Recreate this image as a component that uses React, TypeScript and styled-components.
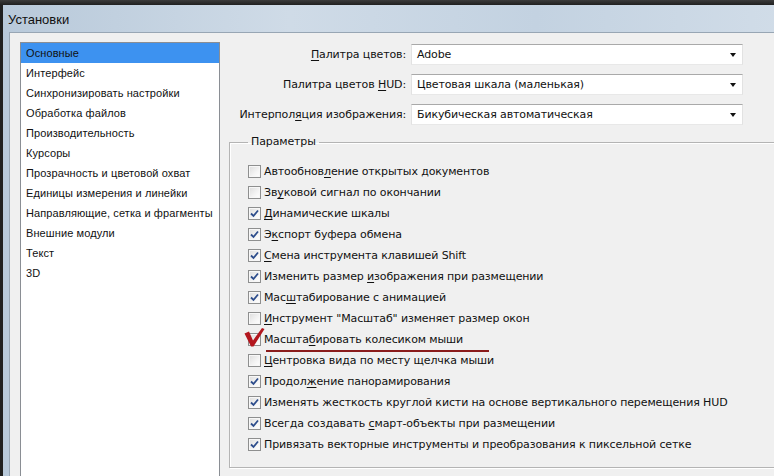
import styled, { createGlobalStyle } from 'styled-components';

const Global = createGlobalStyle`
  html, body {
    margin: 0;
    padding: 0;
    background: #262626;
  }
`;

const Screen = styled.div`
  width: 774px;
  height: 476px;
  overflow: hidden;
  padding: 5px 0 0 3px;
  box-sizing: border-box;
  background: linear-gradient(180deg, #3b3b3b 0px, #202020 5px);
`;

const Window = styled.div`
  width: 820px;
  height: 520px;
  display: flex;
  flex-direction: column;
  background: linear-gradient(90deg, #b8c9da 0%, #cfdbe7 35%, #c3d2e1 65%, #d3dee9 100%);
`;

const TitleBar = styled.div`
  height: 27px;
  display: flex;
  align-items: center;
  padding: 1px 0 0 5px;
  box-sizing: border-box;
  font-family: "Liberation Sans", Arial, sans-serif;
  font-size: 13px;
  color: #111;
`;

const Client = styled.div`
  flex: 1;
  margin-left: 6px;
  display: flex;
  align-items: flex-start;
  padding: 9px 0 0 10px;
  background: #f0f0f0;
  border-top: 1px solid #98a6b4;
  border-left: 1px solid #98a6b4;
`;

const CategoryList = styled.ul`
  list-style: none;
  margin: 0;
  padding: 0;
  width: 198px;
  height: 480px;
  background: #fff;
  border: 1px solid #8a8e94;
  font-family: "Liberation Sans", Arial, sans-serif;
  font-size: 11px;
  letter-spacing: 0.1px;
  color: #111;
`;

const Category = styled.li<{ $active?: boolean }>`
  height: 20px;
  line-height: 21px;
  padding-left: 5px;
  background: ${(p) => (p.$active ? '#3d92f0' : 'transparent')};
  white-space: nowrap;
`;

const Settings = styled.div`
  margin-left: 9px;
  flex: 1;
  font-family: "DejaVu Sans", Verdana, sans-serif;
  font-size: 11px;
  letter-spacing: -0.12px;
  color: #111;
`;

const FormGrid = styled.div`
  display: grid;
  grid-template-columns: 177px 332px;
  column-gap: 5px;
  row-gap: 9px;
  padding-top: 2px;
`;

const Label = styled.label`
  height: 21px;
  display: flex;
  align-items: center;
  justify-content: flex-end;
  white-space: nowrap;
`;

const Combo = styled.div`
  height: 21px;
  box-sizing: border-box;
  display: flex;
  align-items: center;
  justify-content: space-between;
  padding: 0 6px 0 5px;
  background: #fff;
  border-top: 1px solid #a9a9a9;
  border-left: 1px solid #e2e2e2;
  border-right: 1px solid #e2e2e2;
  border-bottom: 1px solid #e8e8e8;
`;

const Arrow = styled.span`
  width: 0;
  height: 0;
  border-left: 3.5px solid transparent;
  border-right: 3.5px solid transparent;
  border-top: 4px solid #111;
`;

const Key = styled.span`
  text-decoration: underline;
  text-underline-offset: 2px;
`;

const Group = styled.fieldset`
  margin: 10px 0 0 0;
  padding: 12px 0 12px 18px;
  border: 1px solid #b4b4b4;
  box-shadow: inset 1px 1px 0 #fff, 1px 1px 0 #fff;
  min-width: 0;
`;

const Legend = styled.legend`
  padding: 0 3px;
  line-height: 14px;
  color: #111;
`;

const OptionRow = styled.div`
  position: relative;
  height: 21px;
  display: flex;
  align-items: center;
  gap: 3px;
  white-space: nowrap;
`;

const Box = styled.span`
  width: 13px;
  height: 13px;
  box-sizing: border-box;
  border: 1px solid #8e8f8f;
  background: linear-gradient(135deg, #dcdcdc 0%, #f4f4f4 60%, #ffffff 100%);
  box-shadow: inset 0 0 0 1px #f7f7f7;
  display: flex;
  align-items: center;
  justify-content: center;
  flex-shrink: 0;
`;

const RedCheck = styled.svg`
  position: absolute;
  left: -4px;
  top: -2px;
`;

const RedLine = styled.span`
  position: absolute;
  left: 18px;
  top: 21px;
  width: 223px;
  height: 2px;
  background: #8a1c1c;
`;

type Part = string | { k: string };

const options: { parts: Part[]; checked: boolean; marked?: boolean }[] = [
  { parts: ['Автообнов', { k: 'л' }, 'ение открытых документов'], checked: false },
  { parts: ['Зв', { k: 'у' }, 'ковой сигнал по окончании'], checked: false },
  { parts: [{ k: 'Д' }, 'инамические шкалы'], checked: true },
  { parts: ['Э', { k: 'к' }, 'спорт буфера обмена'], checked: true },
  { parts: [{ k: 'С' }, 'мена инструмента клавишей Shift'], checked: true },
  { parts: ['Изменить размер ', { k: 'и' }, 'зображения при размещении'], checked: true },
  { parts: ['Мас', { k: 'ш' }, 'табирование с анимацией'], checked: true },
  { parts: [{ k: 'И' }, 'нструмент "Масштаб" изменяет размер окон'], checked: false },
  { parts: ['Масшта', { k: 'б' }, 'ировать колесиком мыши'], checked: false, marked: true },
  { parts: [{ k: 'Ц' }, 'ентровка вида по месту щелчка мыши'], checked: false },
  { parts: ['Продол', { k: 'ж' }, 'ение панорамирования'], checked: true },
  { parts: ['Изменять жесткость круглой кисти на основе вертикального перемещения HUD'], checked: true },
  { parts: ['Всегда создавать ', { k: 'с' }, 'март-объекты при размещении'], checked: true },
  { parts: ['Привязать векторные инструменты и преобразования к пиксельной сетке'], checked: true },
];

const categories = [
  'Основные',
  'Интерфейс',
  'Синхронизировать настройки',
  'Обработка файлов',
  'Производительность',
  'Курсоры',
  'Прозрачность и цветовой охват',
  'Единицы измерения и линейки',
  'Направляющие, сетка и фрагменты',
  'Внешние модули',
  'Текст',
  '3D',
];

const renderParts = (parts: Part[]) =>
  parts.map((p, i) => (typeof p === 'string' ? <span key={i}>{p}</span> : <Key key={i}>{p.k}</Key>));

const Tick = () => (
  <svg width="9" height="9" viewBox="0 0 9 9">
    <path d="M1 4.5 L3.5 7 L8 1.5" fill="none" stroke="#2d4d8c" strokeWidth="1.8" />
  </svg>
);

const App = () => (
  <>
    <Global />
    <Screen>
      <Window>
        <TitleBar>Установки</TitleBar>
        <Client>
          <CategoryList>
            {categories.map((c, i) => (
              <Category key={c} $active={i === 0}>
                {c}
              </Category>
            ))}
          </CategoryList>

          <Settings>
            <FormGrid>
              <Label>
                <Key>П</Key>алитра цветов:
              </Label>
              <Combo>
                Adobe
                <Arrow />
              </Combo>
              <Label>
                Палитра цветов&nbsp;<Key>H</Key>UD:
              </Label>
              <Combo>
                Цветовая шкала (маленькая)
                <Arrow />
              </Combo>
              <Label>
                Интерпол<Key>я</Key>ция изображения:
              </Label>
              <Combo>
                Бикубическая автоматическая
                <Arrow />
              </Combo>
            </FormGrid>

            <Group>
              <Legend>Параметры</Legend>
              {options.map((o, i) => (
                <OptionRow key={i}>
                  <Box>{o.checked && <Tick />}</Box>
                  <span>{renderParts(o.parts)}</span>
                  {o.marked && (
                    <>
                      <RedCheck width="21" height="20" viewBox="0 0 21 20">
                        <path
                          d="M0.5 6.5 L5 4.5 L9 13.5 L18 1 L20.5 2 L9.5 19.5 L7 19.5 Z"
                          fill="#b3161e"
                        />
                      </RedCheck>
                      <RedLine />
                    </>
                  )}
                </OptionRow>
              ))}
            </Group>
          </Settings>
        </Client>
      </Window>
    </Screen>
  </>
);

export default App;
